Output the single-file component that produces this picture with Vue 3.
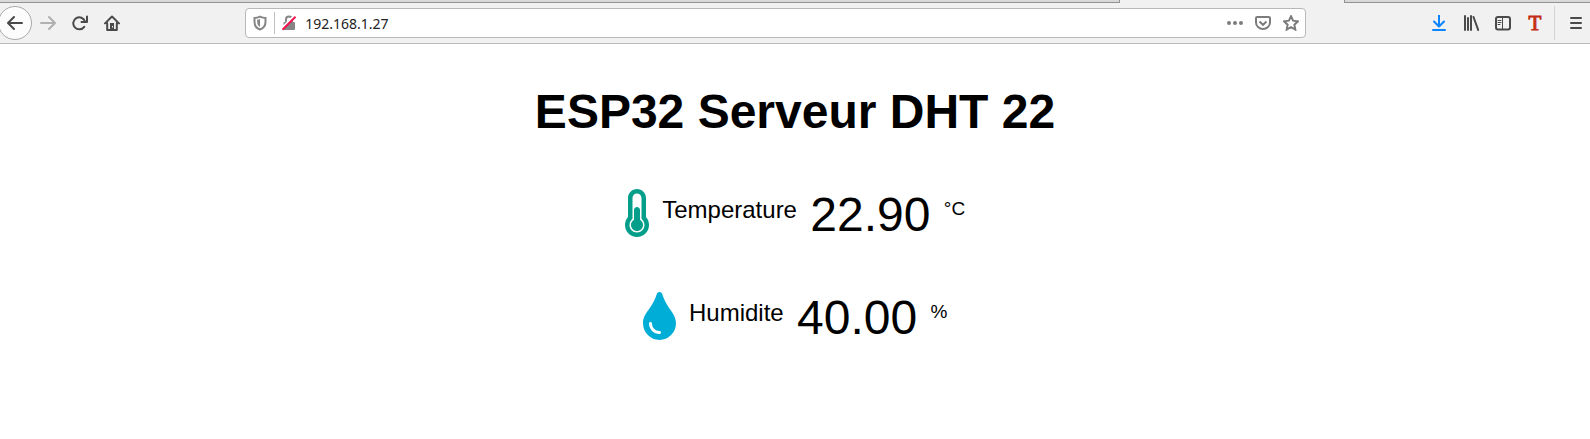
<script setup>
import { ref } from 'vue'

const address = ref('192.168.1.27')

const sensors = ref([
  { id: 'temperature', label: 'Temperature', value: '22.90', unit: '°C' },
  { id: 'humidity', label: 'Humidite', value: '40.00', unit: '%' }
])
</script>

<template>
  <div class="browser">
    <div class="tabs"><div class="tab-active" /></div>

    <form class="toolbar" @submit.prevent>
      <button type="button" class="btn back" aria-label="Back">
        <svg width="16" height="16" viewBox="0 0 16 16"><path d="M15 8H1.5M7 2 1 8l6 6" /></svg>
      </button>
      <button type="button" class="btn" aria-label="Forward" disabled>
        <svg width="16" height="16" viewBox="0 0 16 16"><path d="M1 8h13.5M9 2l6 6-6 6" /></svg>
      </button>
      <button type="button" class="btn" aria-label="Reload">
        <svg width="16" height="16" viewBox="0 0 16 16">
          <path d="M12.2 11.8A6 6 0 1 1 13 6.5" />
          <path d="M15 1.5V7H9.500" />
        </svg>
      </button>
      <button type="button" class="btn" aria-label="Home">
        <svg width="16" height="16" viewBox="0 0 16 16">
          <path d="M1 8.4 8 1.5l7 6.900M3.200 8v7h9.600V8" />
          <path class="solid" fill-rule="evenodd" d="M6 8h4v6.500H6zM8 11v1.400h1V11z" />
        </svg>
      </button>

      <div class="spring" />
      <div class="urlbar">
        <svg width="14" height="16" viewBox="0 0 14 16">
          <path d="M7 1.6C5 2.5 3 2.9 1.5 2.9V7c0 3.6 2 6.3 5.5 7.5 3.5-1.2 5.5-3.9 5.5-7.5V2.9C11 2.9 9 2.5 7 1.6z" />
          <path class="solid" d="M7 4v8c-1.8-1-2.8-2.8-2.8-5V4.8C5.3 4.7 6.2 4.4 7 4z" />
        </svg>
        <span class="divider" />
        <svg width="16" height="16" viewBox="0 0 16 16">
          <path d="M5 8V4.5a3 3 0 0 1 6 0V8" />
          <rect class="solid" x="2.5" y="7" width="11.5" height="8" rx="1" />
          <path class="gap" d="M.5 13.5 13 1" />
          <path class="slash" d="M1.5 14.7 14.5 1.7" />
        </svg>
        <input v-model="address" type="text" aria-label="Address" spellcheck="false">
        <button type="button" class="action" aria-label="Page actions">
          <svg width="16" height="16" viewBox="0 0 16 16">
            <circle class="solid" cx="2" cy="8" r="2" /><circle class="solid" cx="8" cy="8" r="2" /><circle class="solid" cx="14" cy="8" r="2" />
          </svg>
        </button>
        <button type="button" class="action" aria-label="Save to Pocket">
          <svg width="16" height="16" viewBox="0 0 16 16">
            <path d="M2.2 2h11.6Q15 2 15 3.2V7.5a7 6.5 0 0 1-14 0V3.2Q1 2 2.2 2z" />
            <path d="M4.5 6.5 8 9.8l3.5-3.3" />
          </svg>
        </button>
        <button type="button" class="action" aria-label="Bookmark this page">
          <svg width="16" height="16" viewBox="0 0 16 16">
            <path d="M8 1.3 10.1 5.7 14.9 6.3 11.4 9.7 12.3 14.6 8 12.2 3.7 14.6 4.6 9.7 1.1 6.3 5.9 5.7z" />
          </svg>
        </button>
      </div>
      <div class="spring" />

      <button type="button" class="btn download" aria-label="Downloads">
        <svg width="16" height="16" viewBox="0 0 16 16"><path d="M8 .5v10.5M3 6.5l5 5 5-5M2 15h12" /></svg>
      </button>
      <button type="button" class="btn" aria-label="Library">
        <svg width="16" height="16" viewBox="0 0 16 16"><path d="M2 1v14M5 3v12M8 1v14M10.5 2 15.2 15" /></svg>
      </button>
      <button type="button" class="btn" aria-label="Sidebars">
        <svg width="16" height="16" viewBox="0 0 16 16">
          <rect x="1" y="2" width="14" height="12.5" rx="2" />
          <path class="thin" d="M7.5 2v12.5M3 5.5h3M3 7.5h3M3 9.5h2" />
        </svg>
      </button>
      <button type="button" class="btn text-tool" aria-label="Text tool">T</button>
      <span class="bar" />
      <button type="button" class="btn menu" aria-label="Menu">
        <svg width="16" height="16" viewBox="0 0 16 16"><path d="M3 3h10M3 8h10M3 13h10" /></svg>
      </button>
    </form>
  </div>

  <main>
    <h2>ESP32 Serveur DHT 22</h2>
    <p v-for="s in sensors" :key="s.id">
      <svg v-if="s.id === 'temperature'" class="icon thermometer" width="24" height="48" viewBox="0 0 256 512">
        <path d="M192 384c0 35.346-28.654 64-64 64s-64-28.654-64-64c0-23.685 12.876-44.349 32-55.417V224c0-17.673 14.327-32 32-32s32 14.327 32 32v104.583c19.124 11.068 32 31.732 32 55.417zm32-84.653c19.912 22.563 32 52.194 32 84.653 0 70.696-57.303 128-128 128-.299 0-.609-.001-.909-.003C56.789 511.509-.357 453.636.002 383.333.166 351.135 12.22 321.755 32 299.347V96c0-53.019 42.981-96 96-96s96 42.981 96 96v203.347zM208 384c0-34.339-19.37-52.19-32-66.502V96c0-26.467-21.533-48-48-48S80 69.533 80 96v221.498c-12.732 14.428-31.825 32.1-31.999 66.08-.224 43.876 35.563 80.116 79.423 80.42L128 464c44.112 0 80-35.888 80-80z" />
      </svg>
      <svg v-else class="icon drop" width="33" height="48" viewBox="0 0 352 512">
        <path d="M205.22 22.09c-7.94-28.78-49.44-30.12-58.44 0C100.01 179.85 0 222.72 0 333.91 0 432.35 78.72 512 176 512s176-79.65 176-178.09c0-111.75-99.79-153.34-146.78-311.82zM176 448c-61.75 0-112-50.25-112-112 0-8.84 7.16-16 16-16s16 7.16 16 16c0 44.11 35.89 80 80 80 8.84 0 16 7.16 16 16s-7.16 16-16 16z" />
      </svg>
      {{ ' ' }}<span class="label">{{ s.label }}</span>
      {{ ' ' }}<span>{{ s.value }}</span>
      {{ ' ' }}<sup class="units">{{ s.unit }}</sup>
    </p>
  </main>
</template>

<style>
body { margin: 0; background: #fff }
</style>

<style scoped>
* { box-sizing: border-box }
.browser { overflow: hidden; background: #f1f1f1; border-bottom: 1px solid #b8b8b8 }
.tabs { height: 3px; background: #d9d9d9; border-bottom: 1px solid #929292; display: flex; justify-content: flex-end }
.tab-active {
  width: 226px; height: 3px; margin-right: 245px; background: #f1f1f1;
  border: solid #929292; border-width: 0 1px;
}
.toolbar { display: flex; align-items: center; height: 40px }
button { padding: 0; border: 0; background: none }
svg { fill: none; stroke: currentColor; stroke-width: 2 }
.solid { fill: currentColor; stroke: none }
.thin { stroke-width: 1 }
.btn {
  flex: none; width: 32px; height: 32px; color: #4a4a4a;
  display: flex; align-items: center; justify-content: center;
}
.btn svg { stroke-linecap: round; stroke-linejoin: round }
.btn:disabled { color: #b0b0b0 }
.back {
  width: 34px; height: 34px; margin-left: -2px;
  border: 1px solid #a9a9a9; border-radius: 50%; background: #fcfcfc;
}
.spring { flex: 1 }
.urlbar {
  flex: 9; min-width: 0; height: 30px; margin: 0 1px; padding: 0 6px 0 7px;
  display: flex; align-items: center; color: #858585;
  background: #fff; border: 1px solid #b8b8b8; border-radius: 4px;
}
.urlbar > svg { flex: none }
.divider { width: 1px; height: 22px; margin: 0 6px 0 7px; background: #c0c0c0 }
.gap { stroke: #fff }
.slash { stroke: #f5124e }
input {
  flex: 1; min-width: 0; height: 28px; margin-left: 8px; padding: 0;
  border: 0; outline: 0; background: none; color: #222;
  font: 14px "Noto Sans", sans-serif;
}
.action { display: flex; margin-left: 12px; color: #7c7c7c }
.download { color: #0a84ff }
.text-tool { color: #c32d16; font: 21px "Liberation Serif", serif; -webkit-text-stroke: 1px #c32d16 }
.bar { width: 1px; height: 34px; margin: 0 5px 0 3px; background: #d4d4d4 }
.menu { margin-right: -2px }

main { font-family: "Liberation Sans", Arial, sans-serif; font-size: 48px; text-align: center; color: #000 }
h2 { margin: 40px 0 48px; font-size: 48px; line-height: 55px }
p { margin: 0 0 48px; line-height: 55px }
.icon { stroke: none; vertical-align: -6px }
.thermometer { fill: #059e8a }
.drop { fill: #00add6 }
.label { font-size: 24px; line-height: 27px; vertical-align: 13px }
.units { font-size: 19px; line-height: 22px; vertical-align: 16px }
</style>
